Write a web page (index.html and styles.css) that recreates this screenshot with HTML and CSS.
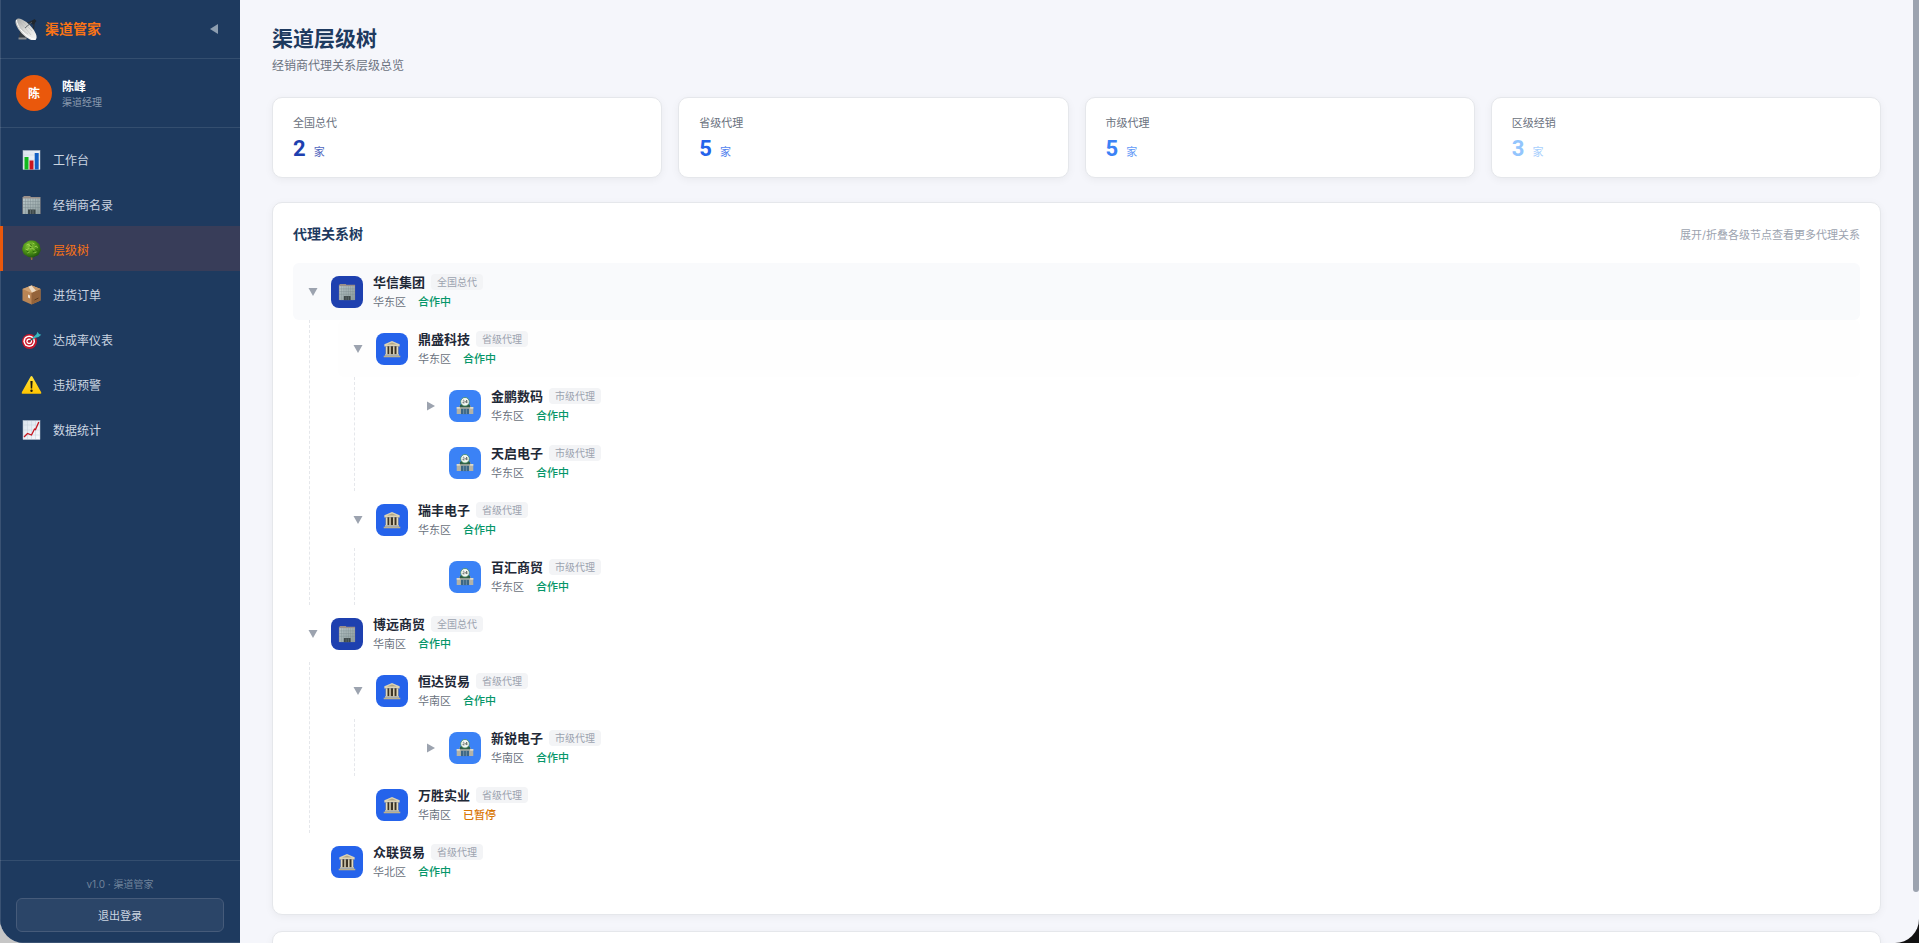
FILE: index.html
```html
<!DOCTYPE html>
<html lang="zh-CN">
<head>
    <meta charset="UTF-8">
    <meta name="viewport" content="width=device-width, initial-scale=1.0">
    <title>渠道层级树 - 渠道管家</title>
    <link rel="stylesheet" href="styles.css">
</head>
<body>
    <!-- 图标库 -->
    <svg class="icon-defs" aria-hidden="true">
        <defs>
            <linearGradient id="glass" x1="0" y1="0" x2="1" y2="1">
                <stop offset="0" stop-color="#b9c6c8"/>
                <stop offset="1" stop-color="#8d9c9d"/>
            </linearGradient>
            <radialGradient id="leaf" cx="0.4" cy="0.35" r="0.65">
                <stop offset="0" stop-color="#8ecb3c"/>
                <stop offset="0.55" stop-color="#4f9418"/>
                <stop offset="1" stop-color="#245c0c"/>
            </radialGradient>
            <linearGradient id="dish" x1="0" y1="0" x2="1" y2="0">
                <stop offset="0" stop-color="#a9aaa8"/>
                <stop offset="0.5" stop-color="#dcdcd9"/>
                <stop offset="1" stop-color="#f6f6f4"/>
            </linearGradient>
            <linearGradient id="paper" x1="0" y1="0" x2="1" y2="1">
                <stop offset="0" stop-color="#dbe4ee"/>
                <stop offset="1" stop-color="#f8fafc"/>
            </linearGradient>
            <linearGradient id="warn" x1="0" y1="0" x2="0" y2="1">
                <stop offset="0" stop-color="#ffe23a"/>
                <stop offset="1" stop-color="#ffc400"/>
            </linearGradient>
        </defs>
        <symbol id="i-dish" viewBox="0 0 22 22">
            <path d="M5 13l5 2 2 5.500H4z" fill="#343b42"/>
            <path d="M3.500 19.500h8v2h-8z" fill="#8b8f92"/>
            <path d="M10 6l8-3M18 14l1.500-11" stroke="#262d34" stroke-width="1.300"/>
            <path d="M15 4l4.500-3 2 2-3.500 4z" fill="#20272e"/>
            <ellipse cx="11" cy="11.500" rx="14" ry="5.800" transform="rotate(46 11 11.500)" fill="url(#dish)"/>
            <path d="M1.500 2c0 6 9 18 19 19.500" fill="none" stroke="#fff" stroke-width="1"/>
            <path d="M10 10l7-6" stroke="#555c62" stroke-width="0.900"/>
            <path d="M5 4l11 13M4 9l9 7M8 4l9 9" stroke="#b5b5b2" stroke-width="0.500"/>
        </symbol>
        <symbol id="i-bar" viewBox="0 0 20 20">
            <rect x="1.500" y="0.500" width="17" height="19" fill="url(#paper)" stroke="#b9c4cf" stroke-width="0.500"/>
            <path d="M2 5h16M2 10h16M2 15h16" stroke="#c5d0db" stroke-width="0.500"/>
            <rect x="3" y="7" width="4" height="12.500" fill="#12b81e"/>
            <rect x="8" y="10.500" width="4" height="9" fill="#c9151e"/>
            <rect x="13.200" y="3" width="4" height="16.500" fill="#1260c4"/>
        </symbol>
        <symbol id="i-office" viewBox="0 0 20 20">
            <path d="M2 2V1h7v1h10v17H1V2z" fill="#9a8f89"/>
            <path d="M1.500 3.500h17V19h-17z" fill="url(#glass)"/>
            <path d="M4 3.500V19M6.500 3.500V19M9 3.500V15M11.500 3.500V15M14 3.500V19M16.500 3.500V19M1.500 6.500h17M1.500 9.500h17M1.500 12.500h17" stroke="#77868a" stroke-width="0.400"/>
            <rect x="6.500" y="14.500" width="7.500" height="4.500" fill="#3c4748"/>
            <path d="M9 15v4M11.500 15v4" stroke="#78878a" stroke-width="0.600"/>
        </symbol>
        <symbol id="i-tree" viewBox="0 0 20 20">
            <path d="M8.800 14h2.600l-.6 6H9.500z" fill="#96703a"/>
            <path d="M10 .5c3-.5 5 .6 6 2.300 1.800 1 2.800 2.600 2.600 4.600 1 1.800.8 3.800-.4 5.200-.6 2.200-2.200 3.600-4.200 3.600-1.600 1.200-3 1.500-4.500 1-1.800.4-3.600-.2-4.600-1.600-2-.4-3.200-1.800-3.400-3.600C.4 10.400.4 8 1.500 6.500 1.700 4.500 2.900 3 4.700 2.500 6 1 8 .4 10 .5z" fill="url(#leaf)"/>
            <path d="M5 5l2-1 1 2M11 3l2 1M13 7l2-1 1 2M4 9l2 1 1-2M9 9l2-1 2 2M6 13l2-1M12 13l3-1" fill="none" stroke="#b2dd5c" stroke-width="0.700"/>
            <path d="M8 7l2 1M11 11l2 1M5 11l2 1M14 9l2 2M9 4l1 2" fill="none" stroke="#1f5207" stroke-width="0.700"/>
        </symbol>
        <symbol id="i-box" viewBox="0 0 20 20">
            <path d="M10 .5l9 3.500v11.500l-9 4-9-4V4z" fill="#b98555"/>
            <path d="M10 .5l9 3.500-9 4L1 4z" fill="#d0a273"/>
            <path d="M10 8l9-4v11.500l-9 4z" fill="#94633a"/>
            <path d="M8.500 1.200l2.500-.4L19 4l-4 1.800z" fill="#c69667"/>
            <path d="M7 1.700L10 .6 14.500 5.800 10.500 7.500z" fill="#eddac2"/>
            <path d="M6.500 9.500l2 1v3l-2-1z" fill="#eee3d5"/>
            <path d="M13 15l4-2" stroke="#5f3c1f"/>
        </symbol>
        <symbol id="i-target" viewBox="0 0 20 20">
            <circle cx="8" cy="11.500" r="7.500" fill="#c4182c"/>
            <circle cx="7.700" cy="11.200" r="5.800" fill="#fff"/>
            <circle cx="7.700" cy="11.200" r="4.300" fill="#cf1c30"/>
            <circle cx="7.700" cy="11.200" r="2.800" fill="#fff"/>
            <circle cx="7.700" cy="11.200" r="1.500" fill="#c4182c"/>
            <path d="M8 11l6-4.500" stroke="#314b52" stroke-width="1.200"/>
            <path d="M11 7.800l4-3.500 1-2.500 1.500 2.200 2.300.8-2.800 2.200-4 1-1.500 2z" fill="#38b6bd"/>
        </symbol>
        <symbol id="i-warn" viewBox="0 0 20 20">
            <path d="M10 1q.6 0 1 .8l8.700 15.500q.5 1.500-.8 1.500H1.100q-1.300 0-.8-1.500L9 1.800q.4-.8 1-.8z" fill="url(#warn)"/>
            <path d="M8.900 6h2.200l-.4 7.500H9.300z" fill="#1d1a10"/>
            <circle cx="10" cy="15.800" r="1.200" fill="#1d1a10"/>
        </symbol>
        <symbol id="i-line" viewBox="0 0 20 20">
            <rect x="1.500" y="0.500" width="17" height="19" fill="url(#paper)" stroke="#b9c4cf" stroke-width="0.500"/>
            <path d="M2 5h16M2 10h16M2 15h16M6 1v18M10 1v18M14 1v18" stroke="#c5d0db" stroke-width="0.500"/>
            <path d="M2.500 17l3.500-3.500 4 1.500 3-6 1 .5L17.300 2" fill="none" stroke="#c5161f" stroke-width="1.300"/>
        </symbol>
        <symbol id="i-temple" viewBox="0 0 20 20">
            <path d="M10 1l8.500 3.800v2.400h-17V4.800z" fill="#ddd3b4"/>
            <path d="M10 2.800L15.500 5h-11z" fill="#b3a785"/>
            <rect x="3" y="7" width="14" height="9" fill="#3b3324"/>
            <path d="M3 7h2v9H3zM7 7h1.600v9H7zM11.200 7h1.600v9h-1.600zM15 7h2v9h-2z" fill="#e3dabd"/>
            <path d="M2.200 15.800h15.600v1.600H2.200z" fill="#d5caa8"/>
            <path d="M0.800 17.400h18.400v1.800H0.800z" fill="#bdb18c"/>
        </symbol>
        <symbol id="i-store" viewBox="0 0 20 20">
            <path d="M.8 11h3v-1.500h12.400V11h3v8H.8z" fill="#b4b3a6"/>
            <path d="M4 11.500C4 8 7 6 10 6s6 2 6 5.500z" fill="#2f5b47"/>
            <path d="M.8 11h3.500v2H.8zM15.700 11h3.500v2h-3.500z" fill="#dcdacd"/>
            <rect x="5.500" y="13" width="9" height="6" fill="#3c6683"/>
            <path d="M8.500 13v6M11.500 13v6" stroke="#9db6c4" stroke-width="0.600"/>
            <circle cx="10" cy="5.300" r="4.800" fill="#f3f6f2" stroke="#3c8a55" stroke-width="0.800"/>
            <path d="M7.500 4.200q1.200-1.200 1.600 0 .2.800-1.600 2.300h2M12 6.800V3.500l-1.500 2.200h2.200" fill="none" stroke="#333c38" stroke-width="0.700"/>
        </symbol>
        <symbol id="i-down" viewBox="0 0 10 10">
            <path d="M.5 1h9L5 9z" fill="#9ca3af"/>
        </symbol>
        <symbol id="i-right" viewBox="0 0 10 10">
            <path d="M1 .5v9L9 5z" fill="#9ca3af"/>
        </symbol>
        <symbol id="i-left" viewBox="0 0 10 10">
            <path d="M9 0v10L1 5z" fill="#8e9eb0"/>
        </symbol>
    </svg>

    <div class="app">
        <aside class="sidebar">
            <div class="brand">
                <svg class="brand-icon"><use href="#i-dish"/></svg>
                <span class="brand-name">渠道管家</span>
                <button class="collapse-btn" aria-label="收起侧栏"><svg class="arrow"><use href="#i-left"/></svg></button>
            </div>
            <div class="user">
                <div class="avatar">陈</div>
                <div>
                    <div class="user-name">陈峰</div>
                    <div class="user-role">渠道经理</div>
                </div>
            </div>
            <nav class="nav">
                <a href="#" class="nav-item"><svg class="nav-icon"><use href="#i-bar"/></svg>工作台</a>
                <a href="#" class="nav-item"><svg class="nav-icon"><use href="#i-office"/></svg>经销商名录</a>
                <a href="#" class="nav-item active"><svg class="nav-icon"><use href="#i-tree"/></svg>层级树</a>
                <a href="#" class="nav-item"><svg class="nav-icon"><use href="#i-box"/></svg>进货订单</a>
                <a href="#" class="nav-item"><svg class="nav-icon"><use href="#i-target"/></svg>达成率仪表</a>
                <a href="#" class="nav-item"><svg class="nav-icon"><use href="#i-warn"/></svg>违规预警</a>
                <a href="#" class="nav-item"><svg class="nav-icon"><use href="#i-line"/></svg>数据统计</a>
            </nav>
            <div class="sidebar-footer">
                <div class="version">v1.0 · 渠道管家</div>
                <button class="logout-btn">退出登录</button>
            </div>
        </aside>

        <main class="main">
            <h1>渠道层级树</h1>
            <p class="subtitle">经销商代理关系层级总览</p>

            <div class="stats">
                <div class="card stat c-national">
                    <div class="stat-label">全国总代</div>
                    <div class="stat-value">2<span class="unit">家</span></div>
                </div>
                <div class="card stat c-province">
                    <div class="stat-label">省级代理</div>
                    <div class="stat-value">5<span class="unit">家</span></div>
                </div>
                <div class="card stat c-city">
                    <div class="stat-label">市级代理</div>
                    <div class="stat-value">5<span class="unit">家</span></div>
                </div>
                <div class="card stat c-district">
                    <div class="stat-label">区级经销</div>
                    <div class="stat-value">3<span class="unit">家</span></div>
                </div>
            </div>

            <section class="card panel">
                <div class="panel-header">
                    <h2>代理关系树</h2>
                    <span class="hint">展开/折叠各级节点查看更多代理关系</span>
                </div>

                <ul class="tree">
                    <li>
                        <div class="node hovered">
                            <button class="toggle" aria-label="折叠"><svg class="arrow"><use href="#i-down"/></svg></button>
                            <div class="node-icon national"><svg><use href="#i-office"/></svg></div>
                            <div>
                                <div class="node-title">华信集团<span class="tag">全国总代</span></div>
                                <div class="node-meta">华东区<span class="status">合作中</span></div>
                            </div>
                        </div>
                        <ul>
                            <li>
                                <div class="node entering">
                                    <button class="toggle" aria-label="折叠"><svg class="arrow"><use href="#i-down"/></svg></button>
                                    <div class="node-icon province"><svg><use href="#i-temple"/></svg></div>
                                    <div>
                                        <div class="node-title">鼎盛科技<span class="tag">省级代理</span></div>
                                        <div class="node-meta">华东区<span class="status">合作中</span></div>
                                    </div>
                                </div>
                                <ul class="city-list">
                                    <li>
                                        <div class="node">
                                            <button class="toggle" aria-label="展开"><svg class="arrow"><use href="#i-right"/></svg></button>
                                            <div class="node-icon city"><svg><use href="#i-store"/></svg></div>
                                            <div>
                                                <div class="node-title">金鹏数码<span class="tag">市级代理</span></div>
                                                <div class="node-meta">华东区<span class="status">合作中</span></div>
                                            </div>
                                        </div>
                                    </li>
                                    <li>
                                        <div class="node">
                                            <span class="toggle"></span>
                                            <div class="node-icon city"><svg><use href="#i-store"/></svg></div>
                                            <div>
                                                <div class="node-title">天启电子<span class="tag">市级代理</span></div>
                                                <div class="node-meta">华东区<span class="status">合作中</span></div>
                                            </div>
                                        </div>
                                    </li>
                                </ul>
                            </li>
                            <li>
                                <div class="node">
                                    <button class="toggle" aria-label="折叠"><svg class="arrow"><use href="#i-down"/></svg></button>
                                    <div class="node-icon province"><svg><use href="#i-temple"/></svg></div>
                                    <div>
                                        <div class="node-title">瑞丰电子<span class="tag">省级代理</span></div>
                                        <div class="node-meta">华东区<span class="status">合作中</span></div>
                                    </div>
                                </div>
                                <ul class="city-list">
                                    <li>
                                        <div class="node">
                                            <span class="toggle"></span>
                                            <div class="node-icon city"><svg><use href="#i-store"/></svg></div>
                                            <div>
                                                <div class="node-title">百汇商贸<span class="tag">市级代理</span></div>
                                                <div class="node-meta">华东区<span class="status">合作中</span></div>
                                            </div>
                                        </div>
                                    </li>
                                </ul>
                            </li>
                        </ul>
                    </li>
                    <li>
                        <div class="node">
                            <button class="toggle" aria-label="折叠"><svg class="arrow"><use href="#i-down"/></svg></button>
                            <div class="node-icon national"><svg><use href="#i-office"/></svg></div>
                            <div>
                                <div class="node-title">博远商贸<span class="tag">全国总代</span></div>
                                <div class="node-meta">华南区<span class="status">合作中</span></div>
                            </div>
                        </div>
                        <ul>
                            <li>
                                <div class="node">
                                    <button class="toggle" aria-label="折叠"><svg class="arrow"><use href="#i-down"/></svg></button>
                                    <div class="node-icon province"><svg><use href="#i-temple"/></svg></div>
                                    <div>
                                        <div class="node-title">恒达贸易<span class="tag">省级代理</span></div>
                                        <div class="node-meta">华南区<span class="status">合作中</span></div>
                                    </div>
                                </div>
                                <ul class="city-list">
                                    <li>
                                        <div class="node">
                                            <button class="toggle" aria-label="展开"><svg class="arrow"><use href="#i-right"/></svg></button>
                                            <div class="node-icon city"><svg><use href="#i-store"/></svg></div>
                                            <div>
                                                <div class="node-title">新锐电子<span class="tag">市级代理</span></div>
                                                <div class="node-meta">华南区<span class="status">合作中</span></div>
                                            </div>
                                        </div>
                                    </li>
                                </ul>
                            </li>
                            <li>
                                <div class="node">
                                    <span class="toggle"></span>
                                    <div class="node-icon province"><svg><use href="#i-temple"/></svg></div>
                                    <div>
                                        <div class="node-title">万胜实业<span class="tag">省级代理</span></div>
                                        <div class="node-meta">华南区<span class="status paused">已暂停</span></div>
                                    </div>
                                </div>
                            </li>
                        </ul>
                    </li>
                    <li>
                        <div class="node">
                            <span class="toggle"></span>
                            <div class="node-icon province"><svg><use href="#i-temple"/></svg></div>
                            <div>
                                <div class="node-title">众联贸易<span class="tag">省级代理</span></div>
                                <div class="node-meta">华北区<span class="status">合作中</span></div>
                            </div>
                        </div>
                    </li>
                </ul>
            </section>

            <section class="card panel next-panel"></section>
        </main>
        <div class="scroll-thumb"></div>
    </div>
</body>
</html>
```
FILE: styles.css
```css
* {
    box-sizing: border-box;
    margin: 0;
    padding: 0;
}

body {
    height: 100vh;
    overflow: hidden;
    background: linear-gradient(90deg, #c6c6c6 50%, #111111 50%);
    font-family: Inter, "Noto Sans CJK SC", sans-serif;
    font-size: 12px;
    color: #1f2937;
}

button {
    font-family: inherit;
    border: none;
    background: none;
    cursor: pointer;
}

ul {
    list-style: none;
}

.icon-defs {
    position: absolute;
    width: 0;
    height: 0;
}

.app {
    position: relative;
    display: flex;
    height: 100vh;
    overflow: hidden;
    background: #f5f6fb;
    border-radius: 0 0 24px 24px;
}

.arrow {
    display: block;
    width: 10px;
    height: 10px;
}

/* 侧边栏 */
.sidebar {
    display: flex;
    flex-direction: column;
    flex: 0 0 240px;
    background: #1e3a5f;
    box-shadow: inset 1px -1px 0 #3a5273;
}

.brand {
    display: flex;
    align-items: center;
    gap: 8px;
    height: 59px;
    padding: 0 19px 0 15px;
    border-bottom: 1px solid rgba(255, 255, 255, 0.1);
}

.brand-icon {
    width: 22px;
    height: 22px;
}

.brand-name {
    flex: 1;
    font-size: 14px;
    font-weight: 700;
    line-height: 20px;
    color: #f97316;
}

.collapse-btn {
    padding: 2px;
}

.user {
    display: flex;
    align-items: center;
    gap: 10px;
    padding: 16px;
    border-bottom: 1px solid rgba(255, 255, 255, 0.1);
}

.avatar {
    width: 36px;
    height: 36px;
    border-radius: 50%;
    background: #ea580c;
    color: #ffffff;
    font-weight: 700;
    line-height: 38px;
    text-align: center;
}

.user-name {
    padding-top: 2px;
    font-weight: 600;
    line-height: 16px;
    color: #ffffff;
}

.user-role {
    font-size: 10px;
    line-height: 14px;
    color: #8798ad;
}

.nav {
    flex: 1;
    padding: 8px 0;
}

.nav-item {
    display: flex;
    align-items: center;
    gap: 11px;
    height: 45px;
    padding: 2px 18px 0;
    border-left: 3px solid transparent;
    color: #cbd5e1;
    text-decoration: none;
}

.nav-item.active {
    background: #383d59;
    border-left-color: #ea580c;
    color: #f97316;
}

.nav-icon {
    width: 21px;
    height: 20px;
}

.sidebar-footer {
    padding: 16px 16px 11px;
    border-top: 1px solid rgba(255, 255, 255, 0.1);
    text-align: center;
}

.version {
    margin-bottom: 6px;
    font-size: 10px;
    line-height: 15px;
    color: #70839b;
}

.logout-btn {
    width: 100%;
    height: 34px;
    border: 1px solid #465b7a;
    border-radius: 6px;
    background: #2b4568;
    color: #cbd5e1;
    font-size: 11px;
}

/* 主内容 */
.main {
    flex: 1;
    min-width: 0;
    overflow: hidden;
    padding: 25px 38px 0 32px;
}

h1 {
    font-size: 21px;
    line-height: 28px;
    color: #1e3a5f;
}

.subtitle {
    margin: 4px 0 22px;
    line-height: 18px;
    color: #6b7280;
}

.card {
    background: #ffffff;
    border: 1px solid #e5e7eb;
    border-radius: 10px;
    box-shadow: 0 2px 8px rgba(0, 0, 0, 0.05);
}

.stats {
    display: grid;
    grid-template-columns: repeat(4, 1fr);
    gap: 16px;
    margin-bottom: 24px;
}

.stat {
    padding: 16px 20px;
}

.stat-label {
    font-size: 11px;
    line-height: 18px;
    color: #6b7280;
}

.stat-value {
    display: flex;
    align-items: baseline;
    gap: 8px;
    height: 29px;
    padding-top: 2px;
    font-family: Roboto, "Noto Sans CJK SC", sans-serif;
    font-size: 22px;
    font-weight: 700;
    line-height: 29px;
}

.unit {
    font-size: 11px;
    font-weight: 400;
    opacity: 0.8;
}

.c-national .stat-value { color: #1e40af; }
.c-province .stat-value { color: #2563eb; }
.c-city .stat-value { color: #3b82f6; }
.c-district .stat-value { color: #93c5fd; }

.panel {
    padding: 20px 20px 24px;
}

.next-panel {
    min-height: 120px;
    margin-top: 16px;
}

.panel-header {
    display: flex;
    align-items: center;
    justify-content: space-between;
    margin-bottom: 18px;
}

h2 {
    font-size: 14px;
    font-weight: 600;
    line-height: 22px;
    color: #1e3a5f;
}

.hint {
    font-size: 11px;
    color: #9ca3af;
}

/* 关系树 */
.tree ul {
    margin-left: 16px;
    padding-left: 28px;
    border-left: 1px dashed #e5e7eb;
}

.tree ul.city-list {
    padding-left: 56px;
}

.node {
    display: flex;
    align-items: center;
    height: 57px;
    padding: 0 10px;
    border-radius: 6px;
}

.node.hovered {
    background: #f9fafc;
}

.node.entering {
    background: #fefefe;
}

.toggle {
    display: flex;
    align-items: center;
    justify-content: center;
    width: 20px;
    height: 20px;
    margin-right: 8px;
}

.node-icon {
    display: flex;
    align-items: center;
    justify-content: center;
    width: 32px;
    height: 32px;
    margin-right: 10px;
    border-radius: 8px;
}

.node-icon svg {
    width: 18px;
    height: 18px;
}

.node-icon.national { background: #1e40af; }
.node-icon.province { background: #2563eb; }
.node-icon.city { background: #3b82f6; }

.node-title {
    display: flex;
    align-items: center;
    gap: 6px;
    font-size: 13px;
    font-weight: 600;
    line-height: 20px;
}

.tag {
    padding: 0 6px;
    border-radius: 4px;
    background: #f3f4f6;
    color: #9ca3af;
    font-size: 10px;
    font-weight: 400;
    line-height: 16px;
}

.node-meta {
    display: flex;
    gap: 12px;
    font-size: 11px;
    line-height: 20px;
    color: #6b7280;
}

.status {
    font-weight: 500;
    color: #059669;
}

.status.paused {
    color: #d97706;
}

.scroll-thumb {
    position: absolute;
    top: 0;
    right: 0;
    width: 6px;
    height: 892px;
    border-radius: 0 0 3px 3px;
    background: #9ca3af;
}
```
